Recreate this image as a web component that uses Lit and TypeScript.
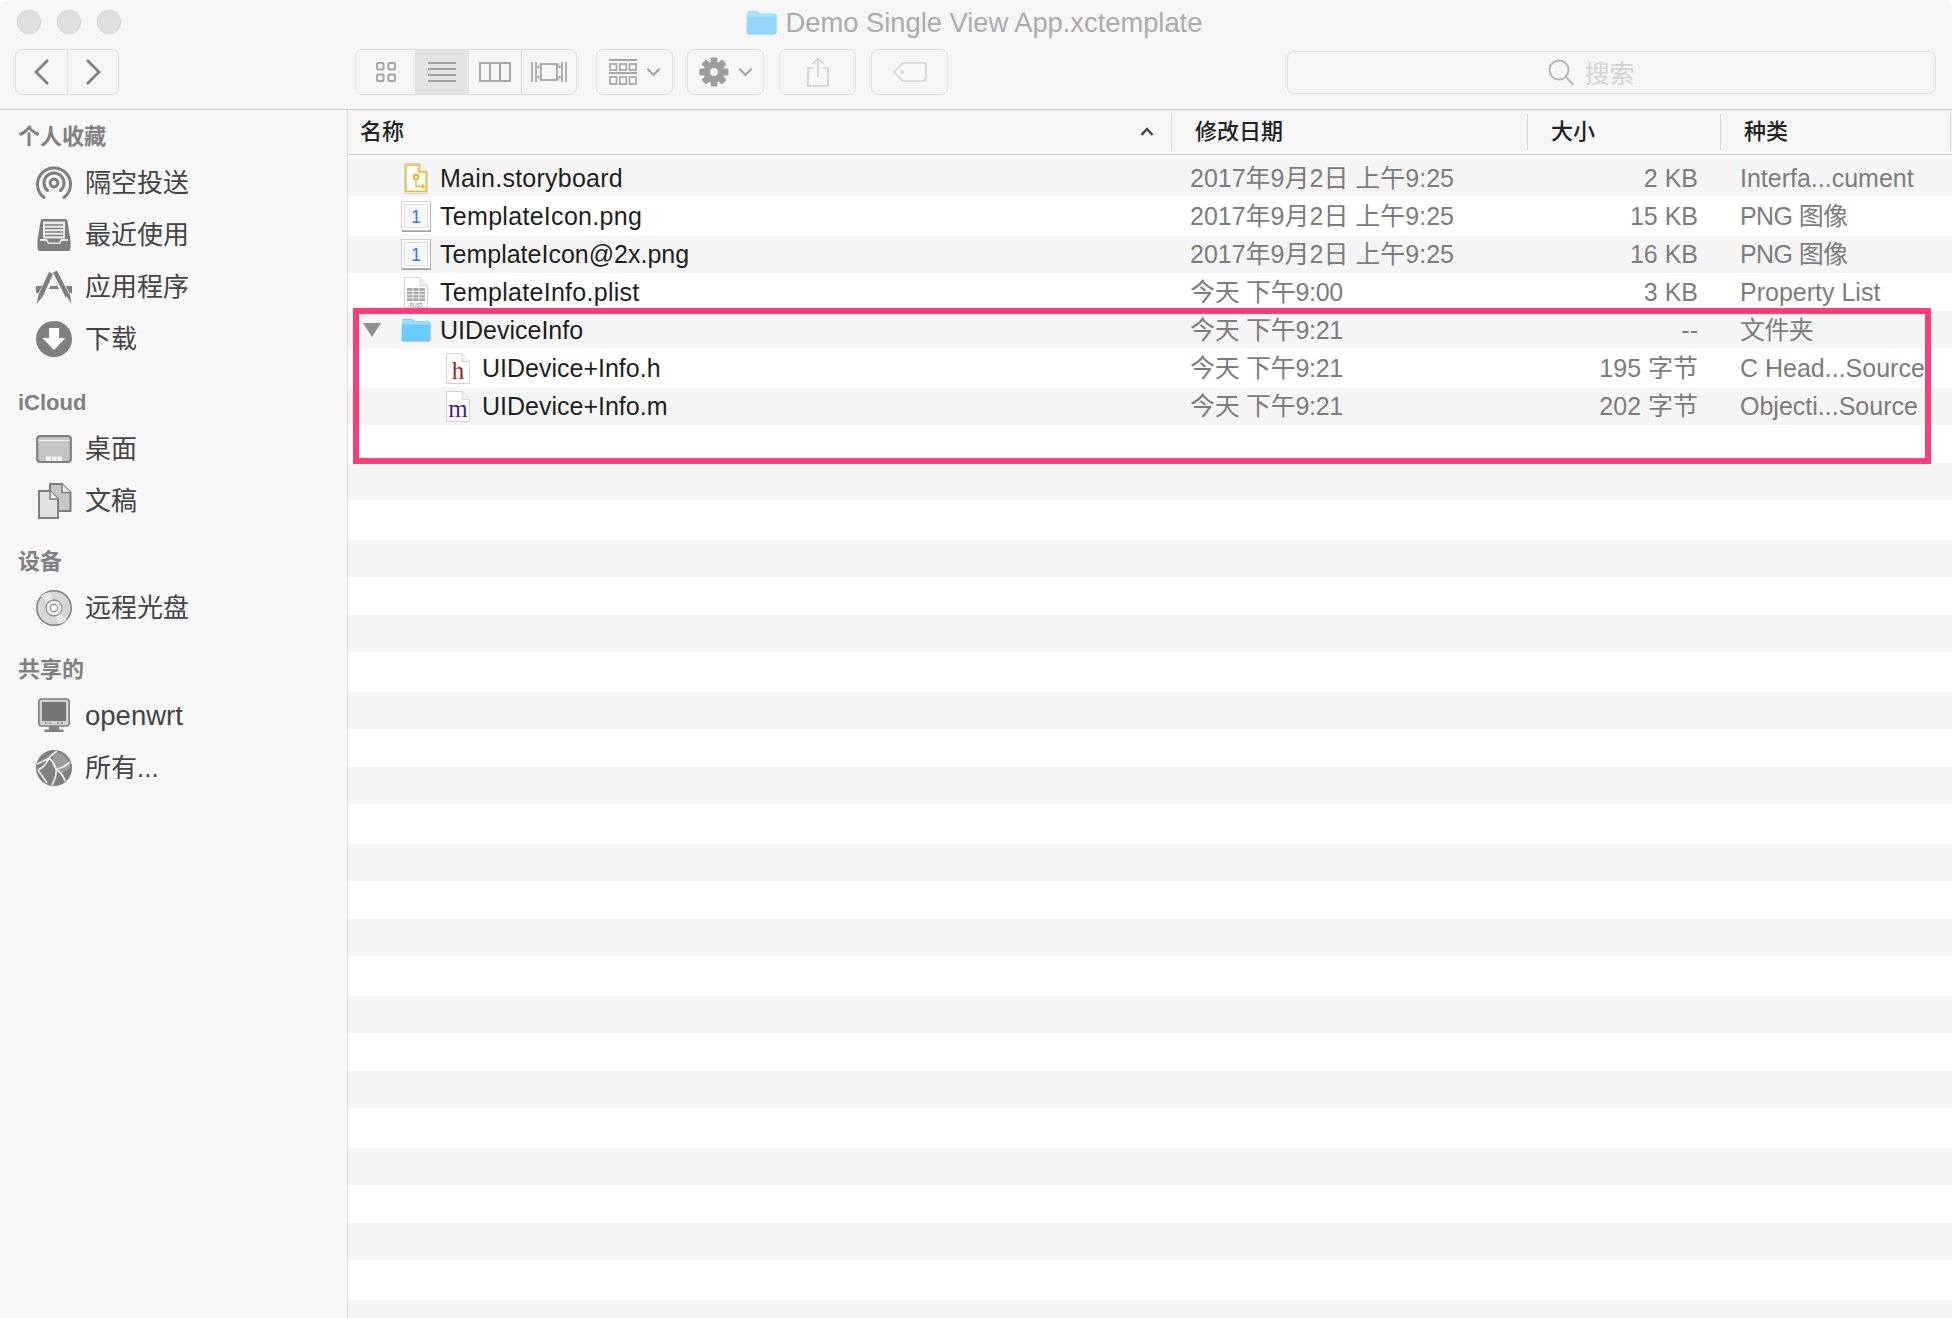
import { LitElement, html, css, svg } from "lit";
import { customElement } from "lit/decorators.js";

const I = "#7f7f7f";
const folder = (top: string, body: string, edge: string) => svg`<svg class="fold" viewBox="0 0 30 24">
  <path d="M1 3.5Q1 1 3 1H10Q11.5 1 12.5 2.5L13.5 3.5H27.5Q29.5 3.5 29.5 6V21.5Q29.5 23.5 27.5 23.5H2.5Q.5 23.5 .5 21.5Z" fill="${edge}"/>
  <path d="M1 3.5Q1 1.5 3 1.5H10Q11.3 1.5 12 3L12.8 4H27Q29 4 29 6V7H1Z" fill="${top}"/>
  <path d="M1 6.5H29V21Q29 22.8 27 22.8H3Q1 22.8 1 21Z" fill="${body}"/>
</svg>`;

const page = (inner: unknown, w = 24) => svg`<svg class="doc" viewBox="0 0 ${w} 31">
  <path d="M.5.5H${w - 8}L${w - .5} 8.5V30.5H.5Z" fill="#fff" stroke="#d2d2d2"/>
  <path d="M${w - 8} .5V8.5H${w - .5}" fill="#f1f1f1" stroke="#d6d6d6"/>
  ${inner}
</svg>`;

const storyboard = page(svg`
  <path d="M2 28.5V2H15V9H22V28.5Z" fill="none" stroke="#f0b429" stroke-width="1.5"/>
  <circle cx="12" cy="14" r="3.4" fill="#f0b429"/><circle cx="12" cy="14" r="1.2" fill="#fff"/>
  <path d="M12 18V23.5H20M17.8 21.3L20 23.5L17.8 25.7" fill="none" stroke="#f0b429" stroke-width="1.4"/>`);
const plist = page(svg`
  <path d="M3 11H21V24H3Z" fill="#a9a9a9"/>
  <path d="M3 14.3H21M3 17.6H21M3 20.9H21M9 11V24M15 11V24" stroke="#fff" stroke-width=".8"/>
  <text x="12" y="29.5" class="plist" text-anchor="middle">PLIST</text>`);
const langDoc = (ch: string, col: string) => page(svg`<text x="12" y="25.5" class="lang" fill="${col}" text-anchor="middle">${ch}</text>`);
const png = svg`<svg class="pngi" viewBox="0 0 30 31">
  <rect x=".5" y=".5" width="29" height="29" fill="#fff" stroke="#cfcfcf"/>
  <path d="M1 30.2H30V2" fill="none" stroke="#a0a0a0" stroke-width="1.4"/>
  <rect x="3.5" y="3.5" width="23" height="23" fill="#f8f8f8" stroke="#dcdcdc"/>
  <rect x="6.5" y="6" width="17" height="18" rx="2" fill="#f4f7fe"/>
  <text x="15" y="21.5" class="one" text-anchor="middle">1</text></svg>`;

const airdrop = svg`<svg viewBox="0 0 36 36" fill="none" stroke="${I}" stroke-width="3" stroke-linecap="round">
  <path d="M8 32.5A16.5 16.5 0 1 1 28 32.5"/><path d="M11.5 25.5A10 10 0 1 1 24.5 25.5"/>
  <circle cx="18" cy="18" r="3.9"/></svg>`;
const recents = svg`<svg viewBox="0 0 36 36">
  <path d="M7 2H29Q31 2 31.4 4L34.5 23V31Q34.5 34 32 34H4Q1.5 34 1.5 31V23L4.6 4Q5 2 7 2Z" fill="${I}"/>
  <rect x="7" y="4.5" width="22" height="17" fill="#ececec"/>
  <path d="M9 8H27M9 11.5H27M9 15H27M9 18.5H27" stroke="${I}" stroke-width="1.5"/>
  <path d="M4 22H11L13 25.5H23L25 22H32V24H26L24 27H12L10 24H4Z" fill="#e4e4e4"/></svg>`;
const apps = svg`<svg viewBox="0 0 36 36">
  <path d="M0 17H36V24H29L27 20H9L7 24H0Z" fill="${I}"/>
  <path d="M18 2.5L3 31" stroke="#f7f7f7" stroke-width="7.5"/><path d="M18 2.5L33 31" stroke="#f7f7f7" stroke-width="7.5"/>
  <path d="M15 4L4.5 27" stroke="${I}" stroke-width="4.6"/><path d="M19 2.5L31.5 27" stroke="${I}" stroke-width="4.6"/>
  <path d="M2.3 26L6.5 28L.8 34.5ZM29.5 26L33.7 24.5L35.5 34.5Z" fill="${I}"/></svg>`;
const downloads = svg`<svg viewBox="0 0 36 36"><circle cx="18" cy="18" r="18" fill="${I}"/>
  <path d="M13 7H23V17H29.5L18 29L6.5 17H13Z" fill="#fff"/></svg>`;
const desktop = svg`<svg viewBox="0 0 36 36">
  <rect x="1.2" y="5" width="33.6" height="26" rx="3" fill="#c4c4c4" stroke="${I}" stroke-width="2.2"/>
  <path d="M2.5 9.5H33.5" stroke="#f2f2f2" stroke-width="1.4"/>
  <path d="M10 25.5H15V30H10ZM16 25.5H20.5V30H16ZM21.5 25.5H26V30H21.5Z" fill="#f4f4f4"/></svg>`;
const documents = svg`<svg viewBox="0 0 36 36">
  <path d="M14 1H26L34.5 9.5V28H14Z" fill="#c6c6c6" stroke="${I}" stroke-width="2"/>
  <path d="M26 1V9.5H34.5" fill="#eee" stroke="${I}" stroke-width="1.6"/>
  <path d="M3 8H14L22 16V35H3Z" fill="#e2e2e2" stroke="${I}" stroke-width="2"/>
  <path d="M14 8V16H22" fill="#f2f2f2" stroke="${I}" stroke-width="1.6"/></svg>`;
const disc = svg`<svg viewBox="0 0 36 36">
  <circle cx="18" cy="18" r="17.2" fill="#d6d6d6" stroke="${I}" stroke-width="1.5"/>
  <path d="M18 18L5 6A17 17 0 0 1 14 2ZM18 18L31 30A17 17 0 0 1 22 34Z" fill="#e8e8e8"/>
  <circle cx="18" cy="18" r="8" fill="#ececec" stroke="#8f8f8f" stroke-width="1.3"/>
  <circle cx="18" cy="18" r="3.6" fill="#f8f8f8" stroke="#8f8f8f" stroke-width="1.2"/></svg>`;
const computer = svg`<svg viewBox="0 0 36 36">
  <rect x="2.8" y="1" width="30.4" height="27" rx="3" fill="#d2d2d2" stroke="${I}" stroke-width="1.6"/>
  <rect x="6" y="4" width="24" height="19" fill="#757575"/>
  <path d="M9 25H11M13 25H15M21 25H23M25 25H27" stroke="#8a8a8a" stroke-width="1.4"/>
  <path d="M13 28.5H23V31.5H27.5V34H8.5V31.5H13Z" fill="${I}"/></svg>`;
const network = svg`<svg viewBox="0 0 36 36"><circle cx="18" cy="18" r="18" fill="#808080"/>
  <path d="M18 2A16 16 0 0 1 34 18L26 24L16 16Z" fill="#9a9a9a"/>
  <path d="M2 20Q10 16 13 8Q15 5 21 1M13 8Q18 12 20 19Q21 26 16 35M20 19Q27 18 34 12M20 19Q27 24 29 31M2 20Q7 27 11 33M1 14Q6 12 13 8" fill="none" stroke="#ececec" stroke-width="1.7"/></svg>`;

const gear = svg`<svg viewBox="0 0 30 30" fill="#9c9c9c">
  ${[0, 45, 90, 135, 180, 225, 270, 315].map((a) => svg`<rect x="11.6" y=".5" width="6.8" height="7" rx="1" transform="rotate(${a} 15 15)"/>`)}
  <circle cx="15" cy="15" r="10.5"/><circle cx="15" cy="15" r="4" fill="#f6f6f6"/></svg>`;
const chev = svg`<svg class="chev" viewBox="0 0 16 10" fill="none" stroke="#9c9c9c" stroke-width="2"><path d="M1.5 1.5L8 8L14.5 1.5"/></svg>`;

const sidebar = [
  { h: "个人收藏", c: "s1", items: [[airdrop, "隔空投送"], [recents, "最近使用"], [apps, "应用程序"], [downloads, "下载"]] },
  { h: "iCloud", c: "s2", items: [[desktop, "桌面"], [documents, "文稿"]] },
  { h: "设备", c: "s3", items: [[disc, "远程光盘"]] },
  { h: "共享的", c: "s4", items: [[computer, "openwrt", "latin"], [network, "所有..."]] },
];

const blue = () => folder("#9cdcfd", "#6ccafc", "#4fb2e6");
const rows = [
  { n: "Main.storyboard", ls: 0.25, i: storyboard, d: "2017年9月2日 上午9:25", s: "2 KB", k: "Interfa...cument", l: 0 },
  { n: "TemplateIcon.png", ls: 0.3, i: png, d: "2017年9月2日 上午9:25", s: "15 KB", k: "PNG 图像", kls: -0.6, l: 0 },
  { n: "TemplateIcon@2x.png", i: png, d: "2017年9月2日 上午9:25", s: "16 KB", k: "PNG 图像", kls: -0.6, l: 0 },
  { n: "TemplateInfo.plist", ls: 0.28, i: plist, d: "今天 下午9:00", dls: -0.3, s: "3 KB", k: "Property List", l: 0 },
  { n: "UIDeviceInfo", i: blue(), d: "今天 下午9:21", dls: -0.3, s: "--", k: "文件夹", kls: -0.6, l: 0, open: true },
  { n: "UIDevice+Info.h", i: langDoc("h", "#a81c2e"), d: "今天 下午9:21", dls: -0.3, s: "195 字节", k: "C Head...Source", l: 1 },
  { n: "UIDevice+Info.m", i: langDoc("m", "#4a1f93"), d: "今天 下午9:21", dls: -0.3, s: "202 字节", k: "Objecti...Source", l: 1 },
];
const sp = (v?: number) => (v ? `letter-spacing:${v}px` : "");

@customElement("app-root")
export class AppRoot extends LitElement {
  static styles = css`
    :host { display: block; width: 1952px; height: 1318px; overflow: hidden; background: #fff;
      font-family: "Liberation Sans", "Noto Sans CJK SC", sans-serif; }
    .win { width: 100%; height: 100%; display: flex; flex-direction: column; border-radius: 9px 9px 0 0; overflow: hidden; background: #f6f6f6; }
    .chrome { height: 108.5px; flex: none; border-bottom: 1.5px solid #c8c8c8; background: #f6f6f6; }
    .titlebar { height: 49px; display: grid; grid-template-columns: 1fr auto 1fr; align-items: start; }
    .lights { display: flex; gap: 16px; padding: 10px 0 0 16.5px; }
    .light { width: 24px; height: 24px; border-radius: 50%; background: #dfdfdf; box-shadow: inset 0 0 0 1px #d6d6d6; }
    .title { display: flex; align-items: center; gap: 9px; height: 46px; color: #ababab; font-size: 27.3px; padding-right: 4px; }
    .title .fold { width: 31px; height: 25px; margin-top: -1px; }
    .toolbar { display: flex; align-items: center; height: 46px; padding: 0 16px 0 15px; }
    .seg { display: flex; height: 46px; box-sizing: border-box; border: 1.5px solid #dedede; border-radius: 7px; }
    .seg > div { display: flex; align-items: center; justify-content: center; height: 100%; box-sizing: border-box; }
    .seg > div + div { border-left: 1.5px solid #dedede; }
    .nav > div { width: 51px; }
    .nav svg { width: 20px; height: 30px; }
    .views { margin-left: 236px; }
    .views svg { height: 22px; }
    .v1 { width: 59px; } .v1 svg { width: 20px; }
    .v2 { width: 53px; background: #e3e3e3; } .v2 svg { width: 28px; }
    .v3 { width: 53px; } .v3 svg { width: 32px; }
    .v4 { width: 55px; } .v4 svg { width: 36px; }
    .btn { height: 46px; box-sizing: border-box; border: 1.5px solid #dedede; border-radius: 7px; display: flex; align-items: center; justify-content: center; width: 77px; }
    .group { margin-left: 19px; gap: 9px; }
    .group .g { width: 28px; height: 27px; }
    .gearb { margin-left: 14px; gap: 9px; }
    .gearb .g { width: 30px; height: 30px; display: flex; }
    .chev { width: 15px; height: 10px; }
    .share { margin-left: 15px; } .share svg { width: 24px; height: 30px; }
    .tag { margin-left: 15px; } .tag svg { width: 34px; height: 20px; }
    .search { margin-left: auto; width: 649px; height: 43px; box-sizing: border-box; border: 1.5px solid #dedede; border-radius: 7px; display: flex; align-items: center; justify-content: center; gap: 10px; color: #d2d2d2; font-size: 25px; padding-right: 40px; }
    .search svg { width: 26px; height: 26px; }
    .body { flex: 1; display: flex; min-height: 0; }
    .side { width: 348px; flex: none; box-sizing: border-box; border-right: 1.5px solid #dcdcdc; background: #f7f7f7; padding-top: 6px; }
    .sec-h { height: 41px; line-height: 41px; padding-left: 18px; font-size: 22px; font-weight: 700; color: #808080; }
    .s1 .item:first-of-type { margin-top: 2px; }
    .s2 { margin-top: 17px; } .s3 { margin-top: 14px; } .s4 { margin-top: 15px; }
    .item { height: 52px; line-height: 52px; display: flex; align-items: center; gap: 13px; padding-left: 36px; color: #444; font-size: 26px; }
    .item .latin { font-size: 27.5px; }
    .item svg { width: 36px; height: 36px; flex: none; }
    .main { flex: 1; min-width: 0; position: relative; background: #fff; overflow: hidden; }
    .head, .row { display: grid; grid-template-columns: 823px 356px 193px 1fr; }
    .head { height: 44px; border-bottom: 1.5px solid #c8c8c8; align-items: center; background: #f6f6f6; color: #222; font-size: 22px; font-weight: 500; margin-bottom: 4.5px; }
    .hc { height: 36px; line-height: 33px; box-sizing: border-box; display: flex; align-items: center; padding-left: 23px; border-left: 1.5px solid #d8d8d8; }
    .hc:last-child { border-right: 1.5px solid #d8d8d8; margin-right: 1px; }
    .hc.first { border-left: 0; padding: 0 17px 0 12px; justify-content: space-between; }
    .hc.first svg { width: 14px; height: 9px; }
    .row { height: 38px; line-height: 38px; align-items: center; font-size: 25px; color: #7c7c7c; white-space: nowrap; }
    .row:nth-child(odd) { background: #f5f5f5; }
    .name { display: flex; align-items: center; color: #1e1e1e; height: 38px; }
    .disc { width: 53px; flex: none; padding-left: 15px; box-sizing: border-box; display: flex; }
    .disc svg { width: 18px; height: 14px; }
    .l1 .disc { width: 98px; }
    .ic { width: 30px; height: 32px; flex: none; margin-right: 9px; display: flex; align-items: center; justify-content: center; }
    .l1 .ic { width: 24px; margin-right: 12px; }
    .doc { width: 24px; height: 31px; }
    .pngi { width: 30px; height: 31px; }
    .ic .fold { width: 30px; height: 24px; }
    .plist { font: 700 4.6px "Liberation Sans", sans-serif; fill: #999; }
    .lang { font: 400 25px "Liberation Serif", serif; }
    .one { font: 400 18px "Liberation Sans", sans-serif; fill: #3c78e8; }
    .date { padding-left: 19px; }
    .size { text-align: right; padding-right: 22px; }
    .kind { padding-left: 20px; }
    .mark { position: absolute; left: 5px; top: 198px; width: 1578px; height: 156px; box-sizing: border-box; border: 6px solid #fd3c7b; pointer-events: none; }
  `;

  render() {
    const stripes = Array.from({ length: 24 });
    return html`<div class="win">
      <div class="chrome">
        <div class="titlebar">
          <div class="lights"><div class="light"></div><div class="light"></div><div class="light"></div></div>
          <div class="title">${folder("#a9e0fb", "#92d6fb", "#7cc6ee")}<span>Demo Single View App.xctemplate</span></div>
          <div></div>
        </div>
        <div class="toolbar">
          <div class="seg nav">
            <div><svg viewBox="0 0 20 30" fill="none" stroke="#7d7d7d" stroke-width="2.6"><path d="M16 3L4 15L16 27"/></svg></div>
            <div><svg viewBox="0 0 20 30" fill="none" stroke="#7d7d7d" stroke-width="2.6"><path d="M4 3L16 15L4 27"/></svg></div>
          </div>
          <div class="seg views">
            <div class="v1"><svg viewBox="0 0 20 22" fill="none" stroke="#a6a6a6" stroke-width="2"><rect x="1" y="2" width="6.5" height="6.5" rx="1"/><rect x="12.5" y="2" width="6.5" height="6.5" rx="1"/><rect x="1" y="13.5" width="6.5" height="6.5" rx="1"/><rect x="12.5" y="13.5" width="6.5" height="6.5" rx="1"/></svg></div>
            <div class="v2"><svg viewBox="0 0 28 22" stroke="#a0a0a0" stroke-width="2"><path d="M0 2H28M0 8H28M0 14H28M0 20H28"/></svg></div>
            <div class="v3"><svg viewBox="0 0 32 22" fill="none" stroke="#a6a6a6" stroke-width="2"><rect x="1" y="2" width="30" height="18"/><path d="M11 2V20M21 2V20"/></svg></div>
            <div class="v4"><svg viewBox="0 0 36 22" fill="none" stroke="#a6a6a6" stroke-width="1.8"><path d="M1 1V21M5 1V21M31 1V21M35 1V21"/><rect x="10" y="3" width="16" height="16"/><path d="M5.5 7L8.5 3V7ZM5.5 15L8.5 19V15ZM30.5 7L27.5 3V7ZM30.5 15L27.5 19V15Z" fill="#a6a6a6" stroke="none"/></svg></div>
          </div>
          <div class="btn group">
            <svg class="g" viewBox="0 0 28 27" fill="none" stroke="#a6a6a6" stroke-width="1.7"><path d="M0 1H28M0 14H28" stroke-width="2"/><rect x="1" y="5" width="6.5" height="6"/><rect x="10.8" y="5" width="6.5" height="6"/><rect x="20.5" y="5" width="6.5" height="6"/><rect x="1" y="18" width="6.5" height="7"/><rect x="10.8" y="18" width="6.5" height="7"/><rect x="20.5" y="18" width="6.5" height="7"/></svg>
            ${chev}
          </div>
          <div class="btn gearb"><span class="g">${gear}</span>${chev}</div>
          <div class="btn share"><svg viewBox="0 0 24 30" fill="none" stroke="#d0d0d0" stroke-width="1.7"><path d="M7 11H2V29H22V11H17M12 20V1.5M6.5 7L12 1.5L17.5 7"/></svg></div>
          <div class="btn tag"><svg viewBox="0 0 34 20" fill="none" stroke="#d2d2d2" stroke-width="1.7"><path d="M10 1H30Q33 1 33 4V16Q33 19 30 19H10L1 10Z"/><circle cx="9" cy="10" r="1" fill="#d2d2d2"/></svg></div>
          <div class="search"><svg viewBox="0 0 26 26" fill="none" stroke="#b4b4b4" stroke-width="1.9"><circle cx="11" cy="11" r="9.5"/><path d="M18 18L25 25.5"/></svg><span>搜索</span></div>
        </div>
      </div>
      <div class="body">
        <div class="side">
          ${sidebar.map((s) => html`<div class=${s.c}>
            <div class="sec-h">${s.h}</div>
            ${s.items.map((it) => html`<div class="item">${it[0]}<span class=${(it[2] as string) || ""}>${it[1]}</span></div>`)}
          </div>`)}
        </div>
        <div class="main">
          <div class="head">
            <div class="hc first"><span>名称</span><svg viewBox="0 0 14 9" fill="none" stroke="#444" stroke-width="2.4"><path d="M1.5 8L7 2L12.5 8"/></svg></div>
            <div class="hc">修改日期</div><div class="hc">大小</div><div class="hc">种类</div>
          </div>
          <div>
            ${rows.map((r) => html`<div class="row ${r.l ? "l1" : ""}">
              <div class="name">
                <div class="disc">${r.open ? html`<svg viewBox="0 0 18 14" fill="#909090"><path d="M0 0H18L9 14Z"/></svg>` : ""}</div>
                <div class="ic">${r.i}</div><span style=${sp(r.ls)}>${r.n}</span>
              </div>
              <div class="date" style=${sp(r.dls)}>${r.d}</div><div class="size">${r.s}</div><div class="kind" style=${sp(r.kls)}>${r.k}</div>
            </div>`)}
            ${stripes.map(() => html`<div class="row"></div>`)}
          </div>
          <div class="mark"></div>
        </div>
      </div>
    </div>`;
  }
}
